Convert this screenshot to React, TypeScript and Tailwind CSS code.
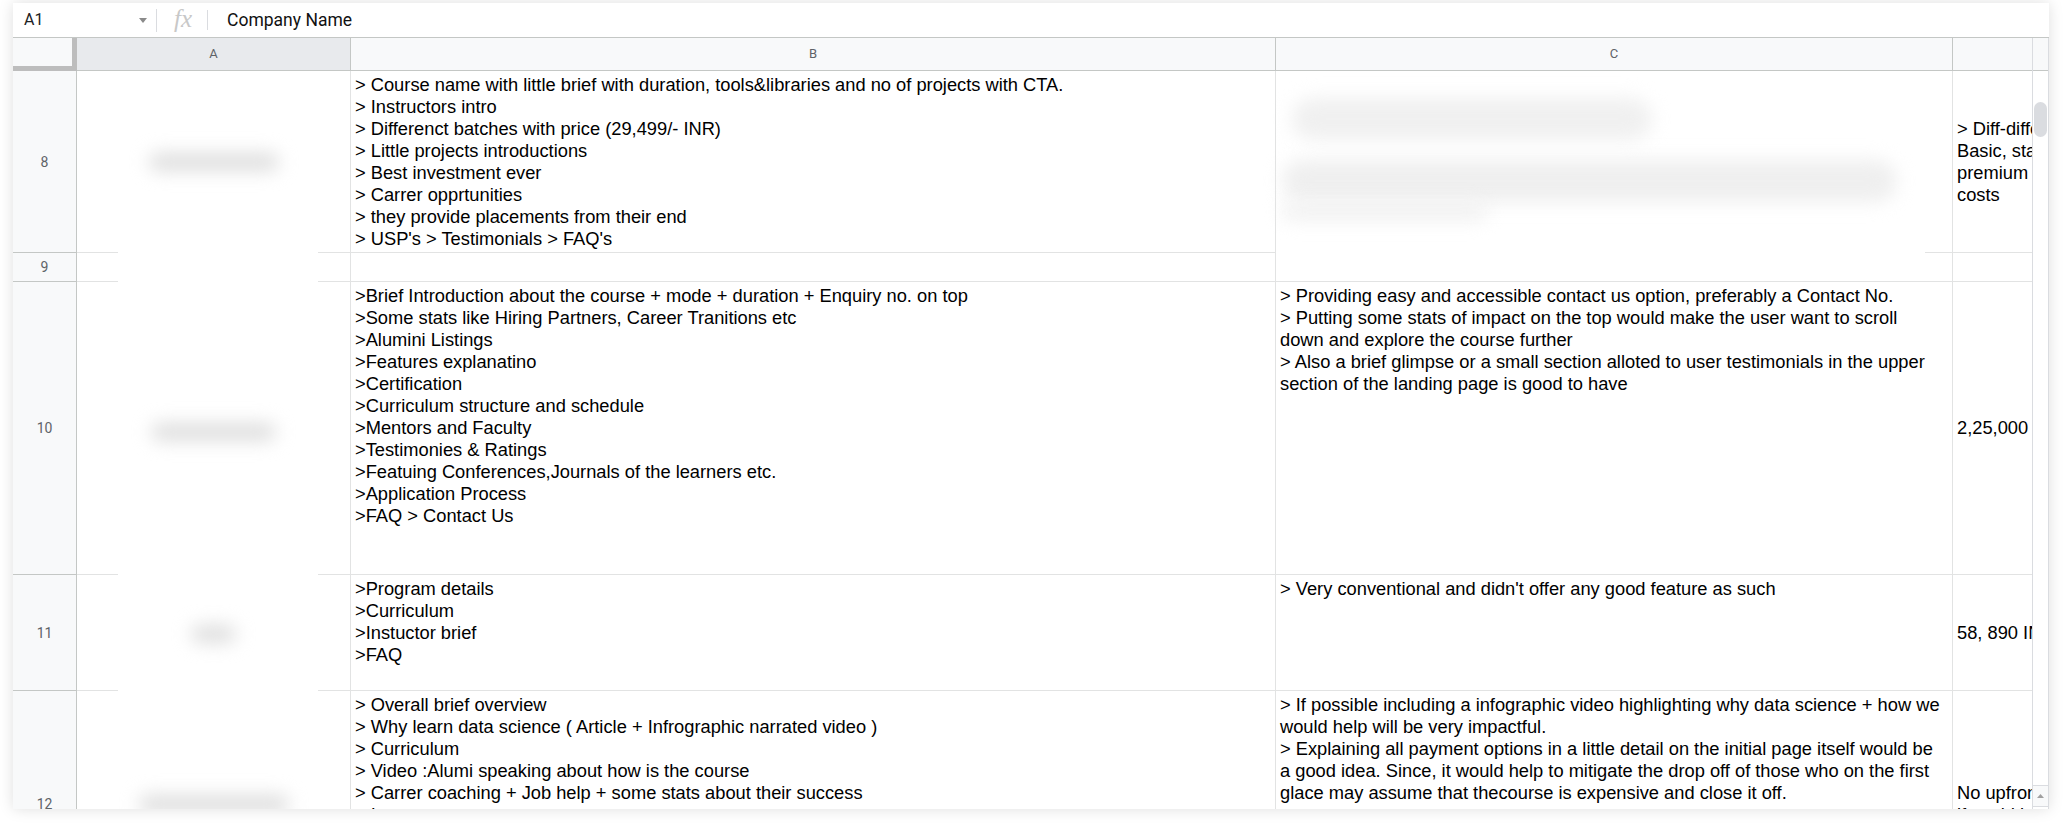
const LINE = "bg-[#e2e3e3]";

function RowNum({ n }: { n: number }) {
  return (
    <div className="w-[64px] shrink-0 flex items-center justify-center bg-[#f8f9fa] border-r border-b border-[#c4c7c5] text-[14px] text-[#5f6368] font-['Roboto',sans-serif]">
      {n}
    </div>
  );
}

function Smudge({ w, h = 16, className = "" }: { w: number; h?: number; className?: string }) {
  return (
    <div
      className={`rounded-full blur-[9px] ${className}`}
      style={{ width: w, height: h }}
    />
  );
}

// column A: company names are blurred out, the middle of the row lines is hidden
function ColA({ smudge, offset = 0, last = false }: { smudge?: number; offset?: number; last?: boolean }) {
  return (
    <div className="w-[274px] shrink-0 flex flex-col border-r border-[#e2e3e3]">
      <div className="flex-1 flex items-center justify-center" style={{ paddingTop: offset }}>
        {smudge ? <Smudge w={smudge} h={18} className="bg-[#dedede]" /> : null}
      </div>
      {!last && (
        <div className="h-px flex">
          <div className={`w-[41px] ${LINE}`} />
          <div className="w-[200px]" />
          <div className={`flex-1 ${LINE}`} />
        </div>
      )}
    </div>
  );
}

function Lines({ items }: { items: string[] }) {
  return (
    <>
      {items.map((t, i) => (
        <div key={i} className="whitespace-nowrap">
          {t}
        </div>
      ))}
    </>
  );
}

function ColB({ items, bottom = false }: { items: string[]; bottom?: boolean }) {
  return (
    <div
      className={`w-[925px] shrink-0 flex flex-col border-r border-b border-[#e2e3e3] pl-[4px] ${
        bottom ? "justify-end pb-[2px]" : "pt-[3px]"
      }`}
    >
      <Lines items={items} />
    </div>
  );
}

function ColC({ items }: { items: string[] }) {
  return (
    <div className="w-[677px] shrink-0 flex flex-col border-r border-b border-[#e2e3e3] pl-[4px] pt-[3px]">
      <Lines items={items} />
    </div>
  );
}

function ColD({ items, pad }: { items: string[]; pad?: number }) {
  return (
    <div
      className={`w-[79px] shrink-0 overflow-hidden border-b border-[#e2e3e3] flex flex-col pl-[4px] ${
        pad === undefined ? "justify-center" : ""
      }`}
      style={pad === undefined ? undefined : { paddingTop: pad }}
    >
      <div className="w-[170px]">
        <Lines items={items} />
      </div>
    </div>
  );
}

export default function App() {
  return (
    <div className="w-[2068px] h-[830px] bg-white overflow-hidden pt-[3px]">
      <div className="ml-[13px] w-[2036px] h-[806px] bg-white flex flex-col overflow-hidden shadow-[0_0_14px_rgba(0,0,0,0.13)]">
        {/* formula bar */}
        <div className="h-[35px] shrink-0 flex items-center border-b border-[#c4c7c5] font-['Roboto',sans-serif]">
          <div className="pl-[11px] w-[122px] text-[16px] text-[#202124]">A1</div>
          <svg width="8" height="5" viewBox="0 0 8 5" className="ml-[4px]">
            <path d="M0 0h8L4 5z" fill="#8a8a8a" />
          </svg>
          <div className="ml-[9px] w-px h-[23px] bg-[#dadce0]" />
          <div className="ml-[17px] text-[25px] leading-none italic text-[#c8c8c8] font-['Liberation_Serif',serif] -mt-[4px]">
            fx
          </div>
          <div className="ml-[15px] w-px h-[20px] bg-[#dadce0]" />
          <div className="ml-[19px] text-[17.5px] text-[#111]">Company Name</div>
        </div>

        <div className="flex-1 flex overflow-hidden">
          {/* grid */}
          <div className="w-[2019px] flex flex-col overflow-hidden font-['Liberation_Sans',Arial,sans-serif] text-[18.3px] leading-[22px] text-black">
            {/* column headers */}
            <div className="h-[33px] shrink-0 flex font-['Roboto',sans-serif] text-[13px] text-[#5f6368]">
              <div className="w-[64px] shrink-0 bg-[#f8f9fa] border-r-[5px] border-b-[5px] border-[#bdbdbd]" />
              <div className="w-[274px] shrink-0 flex items-center justify-center bg-[#e8eaed] border-r border-b border-[#c4c7c5]">
                A
              </div>
              <div className="w-[925px] shrink-0 flex items-center justify-center bg-[#f8f9fa] border-r border-b border-[#c4c7c5]">
                B
              </div>
              <div className="w-[677px] shrink-0 flex items-center justify-center bg-[#f8f9fa] border-r border-b border-[#c4c7c5]">
                C
              </div>
              <div className="w-[79px] shrink-0 bg-[#f8f9fa] border-b border-[#c4c7c5]" />
            </div>

            {/* row 8 */}
            <div className="h-[182px] shrink-0 flex">
              <RowNum n={8} />
              <ColA smudge={130} />
              <ColB
                bottom
                items={[
                  "> Course name with little brief with duration, tools&libraries and no of projects with CTA.",
                  "> Instructors intro",
                  "> Differenct batches with price (29,499/- INR)",
                  "> Little projects introductions",
                  "> Best investment ever",
                  "> Carrer opprtunities",
                  "> they provide placements from their end",
                  "> USP's > Testimonials > FAQ's",
                ]}
              />
              <div className="w-[677px] shrink-0 flex flex-col border-r border-[#e2e3e3]">
                <div className="flex-1 flex flex-col items-start">
                  <Smudge w={360} h={42} className="mt-[27px] ml-[16px] bg-[#f0f0f0]" />
                  <Smudge w={615} h={42} className="mt-[20px] ml-[6px] bg-[#efefef]" />
                  <Smudge w={205} h={16} className="mt-[2px] ml-[6px] bg-[#f0f0f0]" />
                </div>
                <div className="h-px flex">
                  <div className="w-[649px]" />
                  <div className={`flex-1 ${LINE}`} />
                </div>
              </div>
              <ColD items={["> Diff-different plans", "Basic, standard and", "premium with", "costs"]} />
            </div>

            {/* row 9 */}
            <div className="h-[29px] shrink-0 flex">
              <RowNum n={9} />
              <ColA />
              <ColB items={[]} />
              <ColC items={[]} />
              <ColD items={[]} />
            </div>

            {/* row 10 */}
            <div className="h-[293px] shrink-0 flex">
              <RowNum n={10} />
              <ColA smudge={125} offset={8} />
              <ColB
                items={[
                  ">Brief Introduction about the course + mode + duration + Enquiry no. on top",
                  ">Some stats like Hiring Partners, Career Tranitions etc",
                  ">Alumini Listings",
                  ">Features explanatino",
                  ">Certification",
                  ">Curriculum structure and schedule",
                  ">Mentors and Faculty",
                  ">Testimonies & Ratings",
                  ">Featuing Conferences,Journals of the learners etc.",
                  ">Application Process",
                  ">FAQ > Contact Us",
                ]}
              />
              <ColC
                items={[
                  "> Providing easy and accessible contact us option, preferably a Contact No.",
                  "> Putting some stats of impact on the top would make the user want to scroll",
                  "down and explore the course further",
                  "> Also a brief glimpse or a small section alloted to user testimonials in the upper",
                  "section of the landing page is good to have",
                ]}
              />
              <ColD items={["2,25,000"]} />
            </div>

            {/* row 11 */}
            <div className="h-[116px] shrink-0 flex">
              <RowNum n={11} />
              <ColA smudge={45} offset={2} />
              <ColB items={[">Program details", ">Curriculum", ">Instuctor brief", ">FAQ"]} />
              <ColC items={["> Very conventional and didn't offer any good feature as such"]} />
              <ColD items={["58, 890 INR"]} />
            </div>

            {/* row 12 */}
            <div className="h-[226px] shrink-0 flex">
              <RowNum n={12} />
              <ColA smudge={150} last />
              <ColB
                items={[
                  "> Overall brief overview",
                  "> Why learn data science ( Article + Infrographic narrated video )",
                  "> Curriculum",
                  "> Video :Alumi speaking about how is the course",
                  "> Carrer coaching + Job help + some stats about their success",
                  "> Instructors",
                ]}
              />
              <ColC
                items={[
                  "> If possible including a infographic video highlighting why data science + how we",
                  "would help will be very impactful.",
                  "> Explaining all payment options in a little detail on the initial page itself would be",
                  "a good idea. Since, it would help to mitigate the drop off of those who on the first",
                  "glace may assume that thecourse is expensive and close it off.",
                ]}
              />
              <ColD items={["No upfront", "if could be"]} pad={91} />
            </div>
          </div>

          {/* vertical scrollbar */}
          <div className="w-[17px] shrink-0 flex flex-col border-l border-r border-[#dadce0]">
            <div className="h-[33px] shrink-0 bg-[#f8f9fa] border-b border-[#c4c7c5]" />
            <div className="flex-1 flex flex-col">
              <div className="mt-[31px] mx-[1px] h-[35px] rounded-full bg-[#dadce0]" />
              <div className="flex-1" />
              <div className="h-[22px] shrink-0 flex items-center justify-center border-t border-b border-[#dadce0] bg-[#f8f9fa]">
                <svg width="7" height="4" viewBox="0 0 7 4">
                  <path d="M0 4h7L3.5 0z" fill="#a0a0a0" />
                </svg>
              </div>
              <div className="h-[2px] shrink-0" />
            </div>
          </div>
        </div>
      </div>
    </div>
  );
}
